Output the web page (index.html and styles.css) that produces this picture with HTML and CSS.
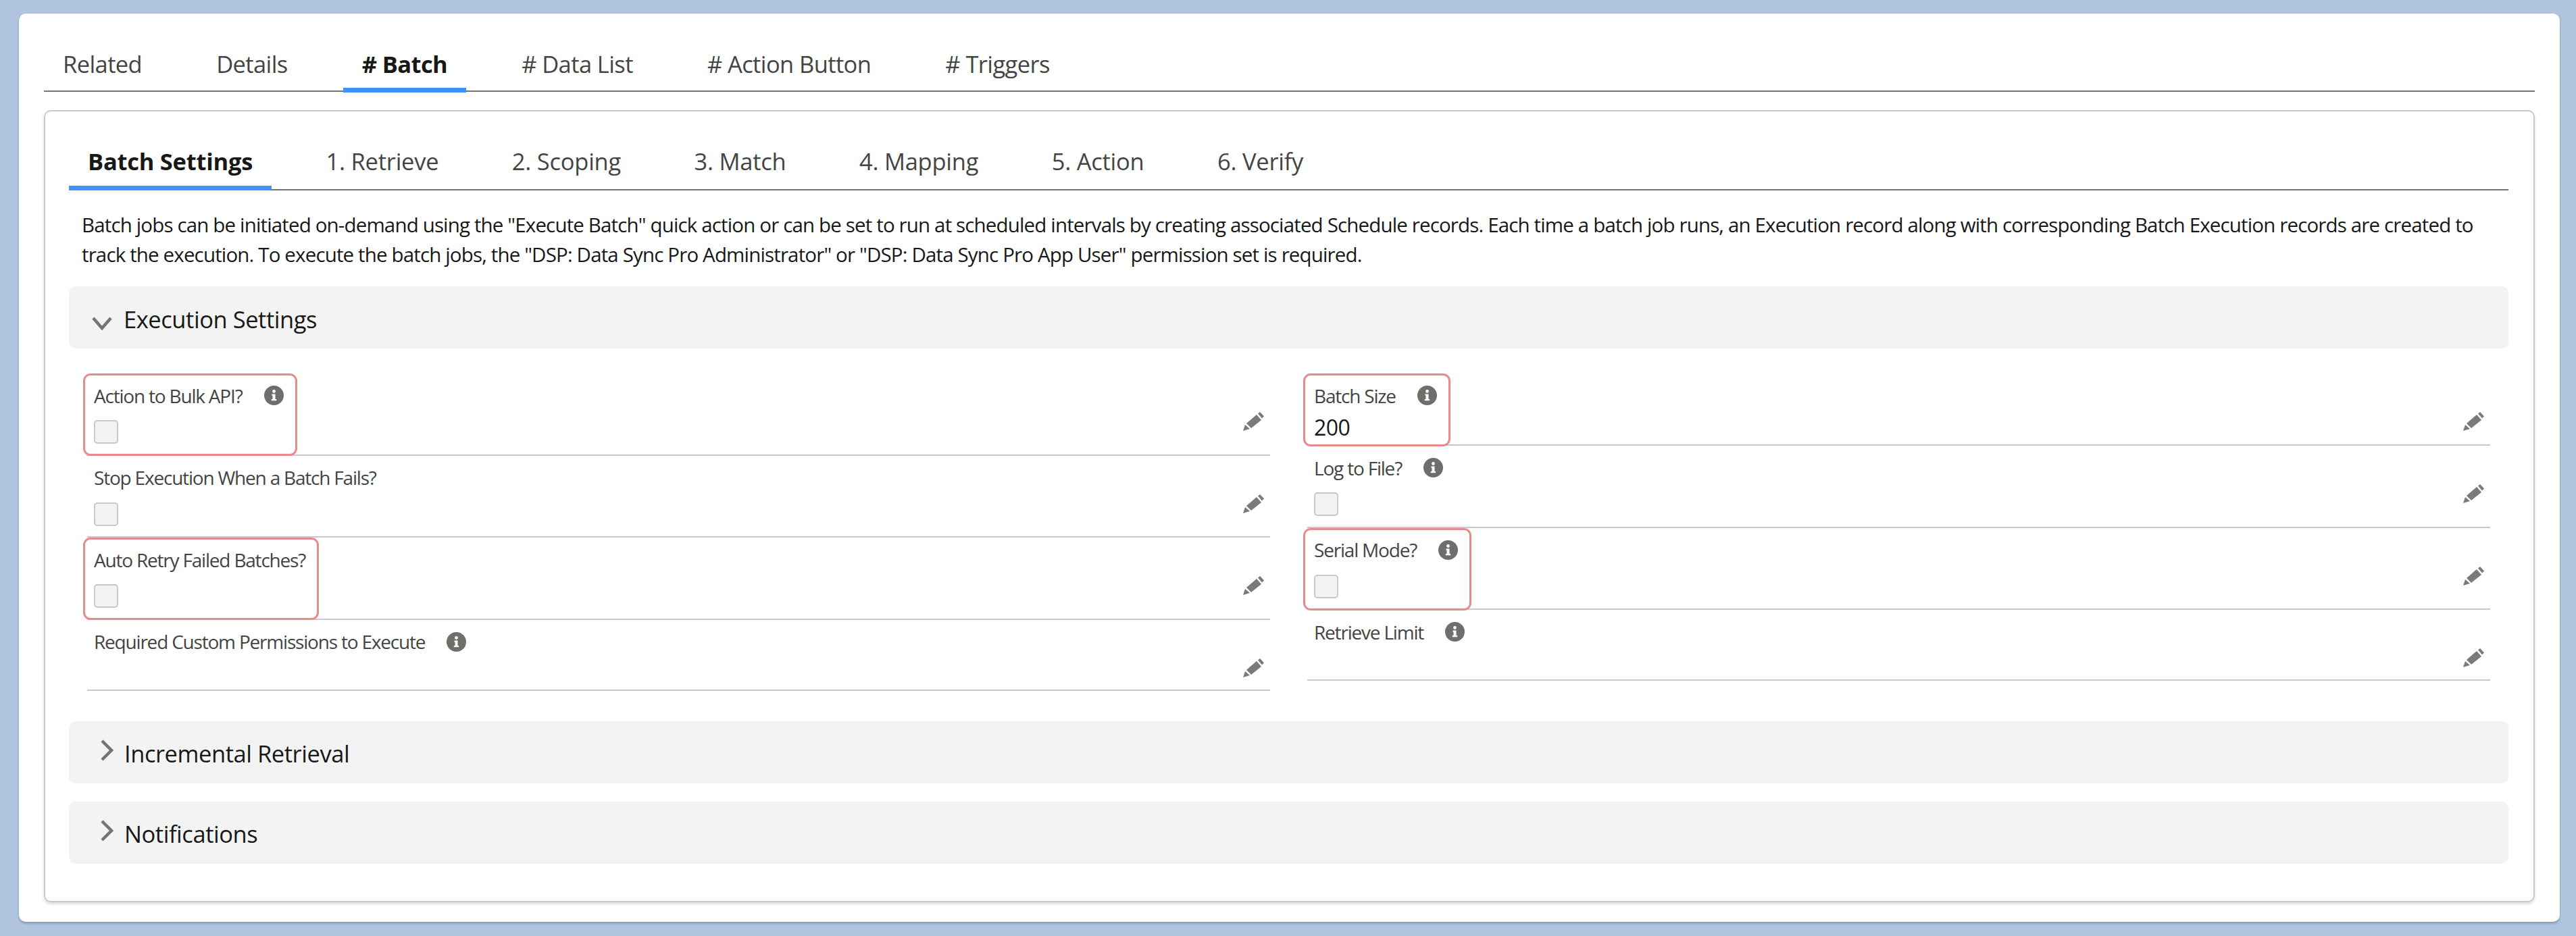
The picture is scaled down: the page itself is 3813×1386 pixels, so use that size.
FILE: index.html
```html
<!DOCTYPE html>
<html lang="en">
<head>
<meta charset="utf-8">
<title>Batch Settings</title>
<link rel="stylesheet" href="styles.css">
</head>
<body>
<svg class="defs" width="0" height="0" aria-hidden="true">
  <symbol id="info" viewBox="0 0 29 29">
    <circle cx="14.5" cy="14.5" r="14.5" fill="#706e6b"/>
    <circle cx="14.5" cy="8.5" r="2.4" fill="#fff"/>
    <path d="M11.5 12.5h5v7.5h1.7v2.2h-7.4V20h1.7v-5.3h-1z" fill="#fff"/>
  </symbol>
  <symbol id="pencil" viewBox="0 0 32 30">
    <path d="M0 29l3-9 7 6z" fill="#7a7a7a"/>
    <path d="M5 18L20 5l7 8-15 12z" fill="#7a7a7a"/>
    <path d="M22 3.500L25 1l6 6.500-3 3z" fill="#7a7a7a"/>
  </symbol>
  <symbol id="chev-down" viewBox="0 0 30 20">
    <path d="M2 2l13 15L28 2" fill="none" stroke="#747474" stroke-width="4.5"/>
  </symbol>
  <symbol id="chev-right" viewBox="0 0 20 32">
    <path d="M3 2l14 14L3 30" fill="none" stroke="#747474" stroke-width="4.5"/>
  </symbol>
</svg>

<main class="page">
  <nav class="tabs top-tabs">
    <a class="tab">Related</a>
    <a class="tab">Details</a>
    <a class="tab active"># Batch</a>
    <a class="tab"># Data List</a>
    <a class="tab"># Action Button</a>
    <a class="tab"># Triggers</a>
  </nav>

  <section class="panel">
    <nav class="tabs sub-tabs">
      <a class="tab active">Batch Settings</a>
      <a class="tab">1. Retrieve</a>
      <a class="tab">2. Scoping</a>
      <a class="tab">3. Match</a>
      <a class="tab">4. Mapping</a>
      <a class="tab">5. Action</a>
      <a class="tab">6. Verify</a>
    </nav>

    <p class="intro">Batch jobs can be initiated on-demand using the "Execute Batch" quick action or can be set to run at scheduled intervals by creating associated Schedule records. Each time a batch job runs, an Execution record along with corresponding Batch Execution records are created to<br>track the execution. To execute the batch jobs, the "DSP: Data Sync Pro Administrator" or "DSP: Data Sync Pro App User" permission set is required.</p>

    <div class="bar">
      <svg class="chev-down"><use href="#chev-down"/></svg>
      <span class="bar-title">Execution Settings</span>
    </div>

    <div class="fields">
      <div class="col">
        <div class="field">
          <div class="box flagged">
            <div class="label">Action to Bulk API?<svg class="info"><use href="#info"/></svg></div>
            <span class="check"></span>
          </div>
          <svg class="pencil"><use href="#pencil"/></svg>
        </div>
        <div class="field">
          <div class="box">
            <div class="label">Stop Execution When a Batch Fails?</div>
            <span class="check"></span>
          </div>
          <svg class="pencil"><use href="#pencil"/></svg>
        </div>
        <div class="field">
          <div class="box flagged">
            <div class="label">Auto Retry Failed Batches?</div>
            <span class="check"></span>
          </div>
          <svg class="pencil"><use href="#pencil"/></svg>
        </div>
        <div class="field short">
          <div class="box">
            <div class="label">Required Custom Permissions to Execute<svg class="info"><use href="#info"/></svg></div>
          </div>
          <svg class="pencil"><use href="#pencil"/></svg>
        </div>
      </div>

      <div class="col">
        <div class="field short">
          <div class="box flagged">
            <div class="label">Batch Size<svg class="info"><use href="#info"/></svg></div>
            <div class="value">200</div>
          </div>
          <svg class="pencil"><use href="#pencil"/></svg>
        </div>
        <div class="field">
          <div class="box">
            <div class="label">Log to File?<svg class="info"><use href="#info"/></svg></div>
            <span class="check"></span>
          </div>
          <svg class="pencil"><use href="#pencil"/></svg>
        </div>
        <div class="field">
          <div class="box flagged">
            <div class="label">Serial Mode?<svg class="info"><use href="#info"/></svg></div>
            <span class="check"></span>
          </div>
          <svg class="pencil"><use href="#pencil"/></svg>
        </div>
        <div class="field short">
          <div class="box">
            <div class="label">Retrieve Limit<svg class="info"><use href="#info"/></svg></div>
          </div>
          <svg class="pencil"><use href="#pencil"/></svg>
        </div>
      </div>
    </div>

    <div class="bar">
      <svg class="chev-right"><use href="#chev-right"/></svg>
      <span class="bar-title">Incremental Retrieval</span>
    </div>
    <div class="bar">
      <svg class="chev-right"><use href="#chev-right"/></svg>
      <span class="bar-title">Notifications</span>
    </div>
  </section>
</main>
</body>
</html>
```

FILE: styles.css
```css
* { box-sizing: border-box; }

html, body { height: 100%; }

body {
  margin: 0;
  padding: 20px 24px 21px 28px;
  background: #b0c4df;
  font-family: "Open Sans", "Noto Sans", sans-serif;
  color: #181818;
  overflow: hidden;
}

.defs { position: absolute; }

.page {
  height: 1345px;
  padding: 0 37px;
  background: #fff;
  border-radius: 10px;
  box-shadow: 0 3px 3px rgba(0, 0, 0, .18), 0 0 2px rgba(0, 0, 0, .12);
}

.tabs {
  display: flex;
  gap: 54px;
  font-size: 34.5px;
  color: #444;
}

.tab {
  display: block;
  padding: 0 28px;
  white-space: nowrap;
}

.tab.active {
  font-weight: 700;
  color: #181818;
  border-bottom: 7px solid #3f93f7;
}

.top-tabs {
  height: 116px;
  padding-top: 43px;
  line-height: 63px;
  letter-spacing: -.6px;
  border-bottom: 2.500px solid #747474;
  margin-bottom: 27px;
}

.top-tabs .tab.active { height: 73.500px; }

.panel {
  height: 1173px;
  padding: 0 37px 0 35px;
  border: 2.500px solid #c9c9c9;
  border-radius: 10px;
  box-shadow: 0 3px 4px rgba(0, 0, 0, .14);
}

.sub-tabs {
  height: 117px;
  gap: 52.500px;
  padding-top: 42px;
  line-height: 64px;
  letter-spacing: -.25px;
  border-bottom: 2.500px solid #747474;
}

.sub-tabs .tab.active { height: 75px; }

.intro {
  margin: 0 0 0 19px;
  padding-top: 29px;
  font-size: 29.500px;
  line-height: 44px;
  letter-spacing: -.85px;
  color: #181818;
  white-space: nowrap;
  height: 142px;
}

.bar {
  display: flex;
  align-items: center;
  height: 92px;
  margin-bottom: 27px;
  padding-left: 34px;
  background: #f3f3f3;
  border-radius: 10px;
}

.bar-title {
  font-size: 34.500px;
  letter-spacing: -.45px;
  color: #181818;
  padding-top: 4px;
}

.chev-down {
  width: 30px;
  height: 20px;
  margin: 17px 17px 0 0;
}

.chev-right {
  width: 20px;
  height: 32px;
  margin: -5px 16px 0 12px;
}

.fields {
  display: grid;
  grid-template-columns: 1751px 1751px;
  column-gap: 55px;
  margin: 37px 0 45px 27px;
}

.field {
  display: flex;
  justify-content: space-between;
  height: 121.500px;
  padding: 0 8px 0 0;
  border-bottom: 2.500px solid #c9c9c9;
}

.field.short { height: 107px; }

.col:first-child .field.short { height: 105px; }

.col:last-child .field.short:last-child { height: 105px; }

.box {
  width: fit-content;
  margin: 0 0 -2.500px -6px;
  padding: 15px 17px 0 13px;
  border: 3px solid transparent;
  border-radius: 11px;
}

.box.flagged { border-color: #e88a8a; }

.label {
  display: flex;
  align-items: center;
  height: 29px;
  font-size: 28px;
  letter-spacing: -1.2px;
  color: #444;
  white-space: nowrap;
}

.info {
  width: 29px;
  height: 29px;
  margin-left: 32px;
  flex: none;
}

.check {
  display: block;
  width: 36px;
  height: 35px;
  margin-top: 22px;
  background: #f3f3f3;
  border: 2.500px solid #c9c9c9;
  border-radius: 5px;
}

.value {
  margin-top: 14px;
  font-size: 32px;
  line-height: 38px;
  letter-spacing: -.5px;
  color: #181818;
}

.pencil {
  width: 32px;
  height: 30px;
  margin-top: 56px;
  flex: none;
}
```
